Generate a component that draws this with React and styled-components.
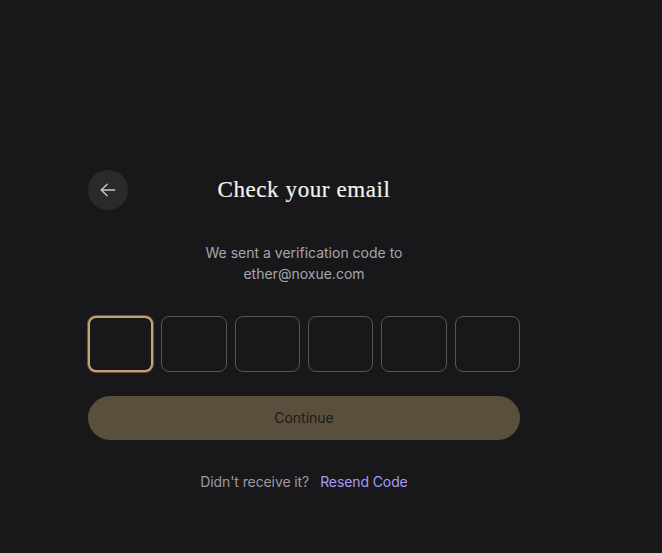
import React from "react";
import styled, { createGlobalStyle } from "styled-components";

const GlobalStyle = createGlobalStyle`
  html, body {
    margin: 0;
    padding: 0;
    background: #18181b;
  }
  body {
    font-family: Inter, "Noto Sans", sans-serif;
  }
`;

const ArrowLeft = () => (
  <svg width="20" height="20" viewBox="0 0 24 24" fill="none" stroke="currentColor" strokeWidth="1.7" strokeLinecap="round" strokeLinejoin="round">
    <path d="M20 12H4" />
    <path d="M11 19l-7-7 7-7" />
  </svg>
);

const App = () => {
  const digits = ["", "", "", "", "", ""];

  return (
    <>
      <GlobalStyle />
      <Page>
        <Panel>
          <Header>
            <BackButton aria-label="Back">
              <ArrowLeft />
            </BackButton>
            <Title>Check your email</Title>
          </Header>
          <Subtitle>
            We sent a verification code to
            <br />
            ether@noxue.com
          </Subtitle>
          <CodeRow>
            {digits.map((d, i) => (
              <CodeBox key={i} $active={i === 0}>
                {d}
              </CodeBox>
            ))}
          </CodeRow>
          <ContinueButton>Continue</ContinueButton>
          <Resend>
            <span>Didn't receive it?</span>
            <ResendLink>Resend Code</ResendLink>
          </Resend>
        </Panel>
      </Page>
    </>
  );
};

export default App;

const Page = styled.div`
  width: 100%;
  min-height: 553px;
  background: #18181b;
  padding: 170px 0 0 88px;
  box-sizing: border-box;
`;

const Panel = styled.div`
  width: 432px;
  display: flex;
  flex-direction: column;
`;

const Header = styled.div`
  position: relative;
  height: 40px;
  display: flex;
  align-items: center;
  justify-content: center;
`;

const BackButton = styled.button`
  position: absolute;
  left: 0;
  top: 0;
  width: 40px;
  height: 40px;
  border-radius: 50%;
  border: none;
  background: #2a2a2d;
  color: #c8c8cc;
  display: flex;
  align-items: center;
  justify-content: center;
  padding: 0;
  cursor: pointer;
`;

const Title = styled.h1`
  margin: 0;
  font-family: "Liberation Serif", "DejaVu Serif", serif;
  font-weight: 400;
  font-size: 23px;
  letter-spacing: 0.6px;
  color: #f4f1ea;
  -webkit-text-stroke: 0.2px #f4f1ea;
`;

const Subtitle = styled.p`
  margin: 32px 0 0;
  text-align: center;
  font-size: 14px;
  line-height: 21px;
  color: #a6a6ad;
`;

const CodeRow = styled.div`
  margin-top: 32px;
  display: grid;
  grid-template-columns: repeat(6, 1fr);
  gap: 8px;
`;

const CodeBox = styled.div`
  height: 56px;
  box-sizing: border-box;
  border-radius: 8px;
  border: 1px solid #56565b;
  background: #18181b;
  ${({ $active }) =>
    $active &&
    `
    border: 2px solid #c4a572;
    box-shadow: 0 0 0 1px rgba(196, 165, 114, 0.45);
  `}
`;

const ContinueButton = styled.button`
  margin-top: 24px;
  height: 44px;
  border: none;
  border-radius: 22px;
  background: #5a4f3c;
  color: #1c1a17;
  font-family: Inter, "Noto Sans", sans-serif;
  font-size: 14px;
  line-height: 1;
  padding: 0 0 1px;
  cursor: pointer;
`;

const Resend = styled.div`
  margin-top: 33px;
  display: flex;
  justify-content: center;
  gap: 11px;
  font-size: 14px;
  letter-spacing: -0.1px;
  color: #9b9ba1;
`;

const ResendLink = styled.span`
  color: #a99cf2;
  cursor: pointer;
`;
